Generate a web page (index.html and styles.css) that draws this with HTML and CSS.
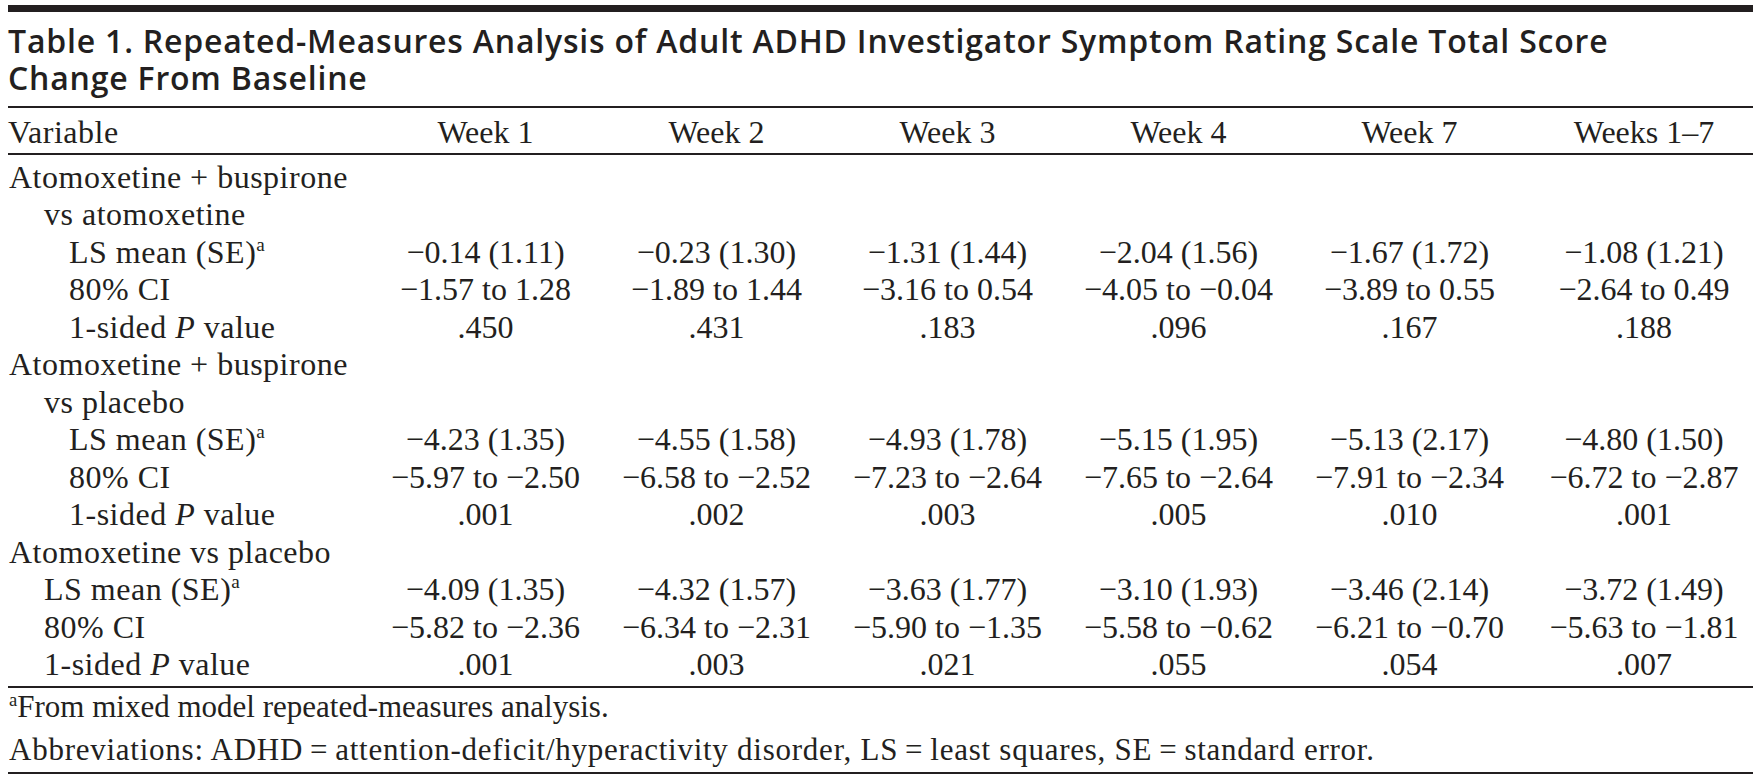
FILE: index.html
```html
<!DOCTYPE html>
<html lang="en">
<head>
<meta charset="utf-8">
<title>Table 1</title>
<link rel="stylesheet" href="styles.css">
</head>
<body>
<div class="page">
  <div class="topbar"></div>
  <h1 class="title">Table 1. Repeated-Measures Analysis of Adult ADHD Investigator Symptom Rating Scale Total Score<br>Change From Baseline</h1>
  <table class="data">
    <colgroup>
      <col class="c-var"><col class="c-wk"><col class="c-wk"><col class="c-wk"><col class="c-wk"><col class="c-wk"><col class="c-last">
    </colgroup>
    <thead>
      <tr><th class="var">Variable</th><th>Week 1</th><th>Week 2</th><th>Week 3</th><th>Week 4</th><th>Week 7</th><th class="last">Weeks 1–7</th></tr>
    </thead>
    <tbody>
      <tr class="first"><td class="var lv0" colspan="7">Atomoxetine + buspirone</td></tr>
      <tr><td class="var lv1" colspan="7">vs atomoxetine</td></tr>
      <tr><td class="var lv2">LS mean (SE)<sup>a</sup></td><td>−0.14 (1.11)</td><td>−0.23 (1.30)</td><td>−1.31 (1.44)</td><td>−2.04 (1.56)</td><td>−1.67 (1.72)</td><td class="last">−1.08 (1.21)</td></tr>
      <tr><td class="var lv2">80% CI</td><td>−1.57 to 1.28</td><td>−1.89 to 1.44</td><td>−3.16 to 0.54</td><td>−4.05 to −0.04</td><td>−3.89 to 0.55</td><td class="last">−2.64 to 0.49</td></tr>
      <tr><td class="var lv2">1-sided <i>P</i> value</td><td>.450</td><td>.431</td><td>.183</td><td>.096</td><td>.167</td><td class="last">.188</td></tr>
      <tr><td class="var lv0" colspan="7">Atomoxetine + buspirone</td></tr>
      <tr><td class="var lv1" colspan="7">vs placebo</td></tr>
      <tr><td class="var lv2">LS mean (SE)<sup>a</sup></td><td>−4.23 (1.35)</td><td>−4.55 (1.58)</td><td>−4.93 (1.78)</td><td>−5.15 (1.95)</td><td>−5.13 (2.17)</td><td class="last">−4.80 (1.50)</td></tr>
      <tr><td class="var lv2">80% CI</td><td>−5.97 to −2.50</td><td>−6.58 to −2.52</td><td>−7.23 to −2.64</td><td>−7.65 to −2.64</td><td>−7.91 to −2.34</td><td class="last">−6.72 to −2.87</td></tr>
      <tr><td class="var lv2">1-sided <i>P</i> value</td><td>.001</td><td>.002</td><td>.003</td><td>.005</td><td>.010</td><td class="last">.001</td></tr>
      <tr><td class="var lv0" colspan="7">Atomoxetine vs placebo</td></tr>
      <tr><td class="var lv1">LS mean (SE)<sup>a</sup></td><td>−4.09 (1.35)</td><td>−4.32 (1.57)</td><td>−3.63 (1.77)</td><td>−3.10 (1.93)</td><td>−3.46 (2.14)</td><td class="last">−3.72 (1.49)</td></tr>
      <tr><td class="var lv1">80% CI</td><td>−5.82 to −2.36</td><td>−6.34 to −2.31</td><td>−5.90 to −1.35</td><td>−5.58 to −0.62</td><td>−6.21 to −0.70</td><td class="last">−5.63 to −1.81</td></tr>
      <tr class="end"><td class="var lv1">1-sided <i>P</i> value</td><td>.001</td><td>.003</td><td>.021</td><td>.055</td><td>.054</td><td class="last">.007</td></tr>
    </tbody>
  </table>
  <div class="notes">
    <p class="note note-first"><sup>a</sup>From mixed model repeated-measures analysis.</p>
    <p class="note note-abbr">Abbreviations: ADHD&#8201;=&#8201;attention-deficit/hyperactivity disorder, LS&#8201;=&#8201;least squares, SE&#8201;=&#8201;standard error.</p>
  </div>
</div>
</body>
</html>
```
FILE: styles.css
```css
html, body {
  margin: 0;
  padding: 0;
  background: #ffffff;
}

body {
  color: #231f20;
  font-family: "Liberation Serif", "Times New Roman", serif;
}

.page {
  width: 1745px;
  margin-left: 8px;
  padding-top: 5px;
}

.topbar {
  height: 7px;
  background: #231f20;
}

.title {
  margin: 0;
  padding: 10px 0 10px;
  font-family: "Open Sans", "Liberation Sans", sans-serif;
  font-weight: 600;
  font-size: 32px;
  line-height: 37px;
  letter-spacing: 0.8px;
  border-bottom: 2px solid #231f20;
}

.data {
  width: 1745px;
  table-layout: fixed;
  border-collapse: collapse;
  font-size: 32px;
  line-height: 37.5px;
}

.c-var { width: 362px; }
.c-wk { width: 231px; }
.c-last { width: 228px; }

.data th,
.data td {
  padding: 0;
  font-weight: 400;
  text-align: center;
  white-space: nowrap;
  vertical-align: baseline;
}

.data .last {
  padding-left: 10px;
}

.data thead th {
  padding-top: 5.5px;
  padding-bottom: 2px;
  border-bottom: 2px solid #231f20;
}

.data .var {
  text-align: left;
  letter-spacing: 0.5px;
}

.data .lv0 { padding-left: 1px; }
.data .lv1 { padding-left: 36px; }
.data .lv2 { padding-left: 61px; }

.data tr.first td {
  padding-top: 3.5px;
}

.data tr.end td {
  padding-bottom: 2.5px;
  border-bottom: 2px solid #231f20;
}

.data sup,
.note sup {
  font-size: 60%;
  line-height: 0;
  vertical-align: 0.6em;
  letter-spacing: 0;
}

.notes {
  border-bottom: 2px solid #231f20;
}

.note {
  margin: 0;
  padding-left: 1px;
  font-size: 31px;
  line-height: 44px;
}

.note-first {
  line-height: 38px;
}

.note-abbr {
  padding-top: 2px;
  letter-spacing: 0.75px;
}
```
